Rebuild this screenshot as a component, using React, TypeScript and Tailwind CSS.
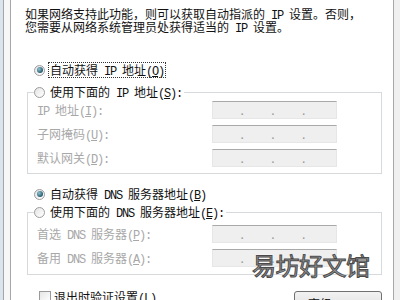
import React from 'react';

// Latin runs get a half-width monospace face, like the old SimSun dialog text.
// "&X" underlines X (the access key).
const T = ({ s }: { s: string }) => {
  const parts = s.split(/([\x20-\x7e]+)/).filter(Boolean);
  return (
    <>
      {parts.map((p, i) => {
        if (!/^[\x20-\x7e]+$/.test(p)) return <React.Fragment key={i}>{p}</React.Fragment>;
        const bits = p.split(/&(.)/);
        return (
          <span key={i} className="font-['Liberation_Mono',monospace] leading-[0px] tracking-[-1.2px]">
            {bits.map((b, j) =>
              j % 2 === 1 ? (
                <span key={j} className="underline">
                  {b}
                </span>
              ) : (
                b
              )
            )}
          </span>
        );
      })}
    </>
  );
};

const Radio = ({ checked }: { checked?: boolean }) => (
  <span className="flex h-[11px] w-[11px] shrink-0 items-center justify-center rounded-full border border-[#9c9c9c] bg-[linear-gradient(135deg,#e4e4e4,#ffffff)]">
    {checked ? (
      <span className="h-[6px] w-[6px] rounded-full bg-[radial-gradient(circle_at_35%_35%,#8fc3d3,#1f5566_75%)]" />
    ) : null}
  </span>
);

const IpBox = () => (
  <div className="grid h-[18px] w-[125px] grid-cols-4 border border-[#e6e6e6] border-t-[#a9a9a9] bg-[#efefef] text-[12px] leading-[16px] text-[#9a9a9a]">
    <span className="text-right">.</span>
    <span className="text-right">.</span>
    <span className="text-right">.</span>
    <span />
  </div>
);

const FieldRow = ({ label }: { label: string }) => (
  <div className="flex h-[18px] items-center">
    <span className="w-[178px] pl-[3px] text-[#a8a8a8]">
      <T s={label} />
    </span>
    <IpBox />
  </div>
);

export default function App() {
  return (
    <div className="relative flex h-[300px] w-[400px] overflow-hidden bg-[#f0f0f0] font-['Noto_Sans_CJK_SC',sans-serif] text-[12px] leading-[14px] text-[#111]">
      {/* window edge */}
      <div className="w-[3px] bg-[#dde3ea]" />
      <div className="w-px bg-[#9ea8b3]" />
      <div className="w-[6px] bg-[#f7f7f7]" />
      <div className="w-px bg-[#a6a6a6]" />

      {/* tab page */}
      <div className="flex w-[382px] flex-col bg-white">
        <p className="ml-[14px] mt-[7px] whitespace-nowrap leading-[13px]">
          <T s="如果网络支持此功能，则可以获取自动指派的 IP 设置。否则，" />
          <br />
          <T s="您需要从网络系统管理员处获得适当的 IP 设置。" />
        </p>

        <div className="mt-[30px] flex h-[14px] items-center gap-[4px] pl-[23px]">
          <Radio checked />
          <span className="px-[1px] outline-1 outline-dotted outline-[#333]">
            <T s="自动获得 IP 地址(&O)" />
          </span>
        </div>

        <fieldset className="ml-[16px] mt-[8px] w-[355px] border border-[#d6dadd] pb-[6px] pl-[6px]">
          <legend className="flex h-[14px] items-center gap-[5px] pr-[2px]">
            <Radio />
            <span>
              <T s="使用下面的 IP 地址(&S):" />
            </span>
          </legend>
          <div className="mt-[2px] flex flex-col gap-[6px]">
            <FieldRow label="IP 地址(&I):" />
            <FieldRow label="子网掩码(&U):" />
            <FieldRow label="默认网关(&D):" />
          </div>
        </fieldset>

        <div className="mt-[13px] flex h-[14px] items-center gap-[5px] pl-[23px]">
          <Radio checked />
          <span>
            <T s="自动获得 DNS 服务器地址(&B)" />
          </span>
        </div>

        <fieldset className="ml-[16px] mt-[4px] w-[355px] border border-[#d6dadd] pb-[7px] pl-[6px]">
          <legend className="flex h-[14px] items-center gap-[5px] pr-[2px]">
            <Radio />
            <span>
              <T s="使用下面的 DNS 服务器地址(&E):" />
            </span>
          </legend>
          <div className="mt-[6px] flex flex-col gap-[6px]">
            <FieldRow label="首选 DNS 服务器(&P):" />
            <FieldRow label="备用 DNS 服务器(&A):" />
          </div>
        </fieldset>

        <div className="ml-[16px] mt-[15px] flex w-[355px] items-start justify-between">
          <div className="flex items-center gap-[3px] pl-[12px]">
            <span className="h-[12px] w-[12px] border border-[#9a9a9a] bg-[linear-gradient(135deg,#e6e6e6,#fff)]" />
            <span>
              <T s="退出时验证设置(&L)" />
            </span>
          </div>
          <button className="mt-[1px] h-[23px] w-[88px] rounded-[3px] border border-[#707070] bg-[linear-gradient(#f2f2f2,#dcdcdc)] pt-[3px] text-[12px] leading-[14px]">
            <T s="高级(&V)..." />
          </button>
        </div>
      </div>

      <div className="w-px bg-[#a9a9a9]" />
      <div className="flex-1 bg-[#f0f0f0]" />

      {/* watermark */}
      <div className="absolute left-[252px] top-[251px] text-[24px] leading-[28px] tracking-[-0.5px] text-[#9b9b9b] [-webkit-text-stroke:1px_#4a4a4a] [text-shadow:0_0_2px_#fff,0_0_2px_#fff]">
        易坊好文馆
      </div>
    </div>
  );
}
